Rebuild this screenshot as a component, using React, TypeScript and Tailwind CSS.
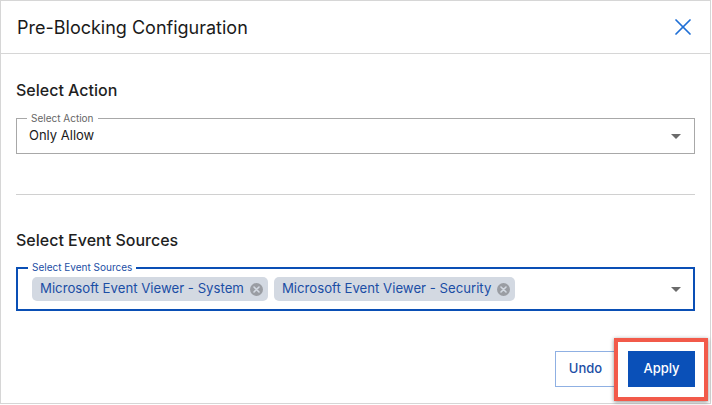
import { X } from "lucide-react";

function Caret() {
  return (
    <svg width="10" height="5" viewBox="0 0 10 5" className="shrink-0">
      <path d="M0 0 L10 0 L5 5 Z" fill="#6b6b6b" />
    </svg>
  );
}

function Chip({ label }: { label: string }) {
  return (
    <div className="flex h-[24px] items-center gap-[6px] rounded-[5px] bg-[#d3d9e2] pl-[8px] pr-[5px] text-[13.2px] text-[#1b4ea5]">
      <span>{label}</span>
      <span className="flex h-[13px] w-[13px] items-center justify-center rounded-full bg-[#9a9da3]">
        <svg width="7" height="7" viewBox="0 0 7 7">
          <path d="M1 1 L6 6 M6 1 L1 6" stroke="#d3d9e2" strokeWidth="1.6" strokeLinecap="round" />
        </svg>
      </span>
    </div>
  );
}

export default function App() {
  return (
    <div className="relative h-[405px] w-[712px] bg-white font-['Inter',sans-serif] text-[#1f1f1f]">
      <div className="flex h-[404px] w-[711px] flex-col border border-[#d6d6d6]">
        {/* Header */}
        <div className="flex h-[53px] shrink-0 items-center justify-between border-b border-[#d6d6d6] pl-[16px] pr-[13px]">
          <h1 className="text-[18px] font-normal text-[#1a1a1a]">Pre-Blocking Configuration</h1>
          <X className="h-[28px] w-[28px] text-[#1f6fd6]" strokeWidth={1.5} />
        </div>

        {/* Body */}
        <div className="flex flex-col px-[15px] pt-[24px]">
          <h2 className="text-[16px] font-medium leading-[24px]">Select Action</h2>
          <div className="relative mt-[16px] flex h-[36px] items-center justify-between border border-[#a8a8a8] pl-[12px] pr-[13px]">
            <span className="absolute -top-[7px] left-[10px] bg-white px-[4px] text-[10px] leading-[12px] text-[#666]">
              Select Action
            </span>
            <span className="text-[13px] text-[#1a1a1a]">Only Allow</span>
            <Caret />
          </div>

          <div className="mt-[40px] h-px bg-[#d0d0d0]" />

          <h2 className="mt-[33px] text-[16px] font-medium leading-[24px]">Select Event Sources</h2>
          <div className="relative mt-[15px] flex h-[44px] items-center justify-between border-2 border-[#0a4fb5] pl-[14px] pr-[12px]">
            <span className="absolute -top-[8px] left-[10px] bg-white px-[4px] text-[10px] leading-[12px] text-[#1b4ea5]">
              Select Event Sources
            </span>
            <div className="flex items-center gap-[6px]">
              <Chip label="Microsoft Event Viewer - System" />
              <Chip label="Microsoft Event Viewer - Security" />
            </div>
            <Caret />
          </div>

          <div className="mt-[40px] flex justify-end gap-[12px]">
            <button className="h-[36px] w-[61px] border border-[#8fb0e3] text-[13px] font-medium text-[#1b4ea5]">
              Undo
            </button>
            <button className="h-[36px] w-[67px] bg-[#0a50b8] text-[13px] font-medium text-white">
              Apply
            </button>
          </div>
        </div>
      </div>

      {/* Highlight around Apply */}
      <div className="absolute left-[614px] top-[338px] h-[63px] w-[94px] border-[4px] border-[#f25a4a] shadow-[0_1px_4px_rgba(0,0,0,0.45)]" />
    </div>
  );
}
